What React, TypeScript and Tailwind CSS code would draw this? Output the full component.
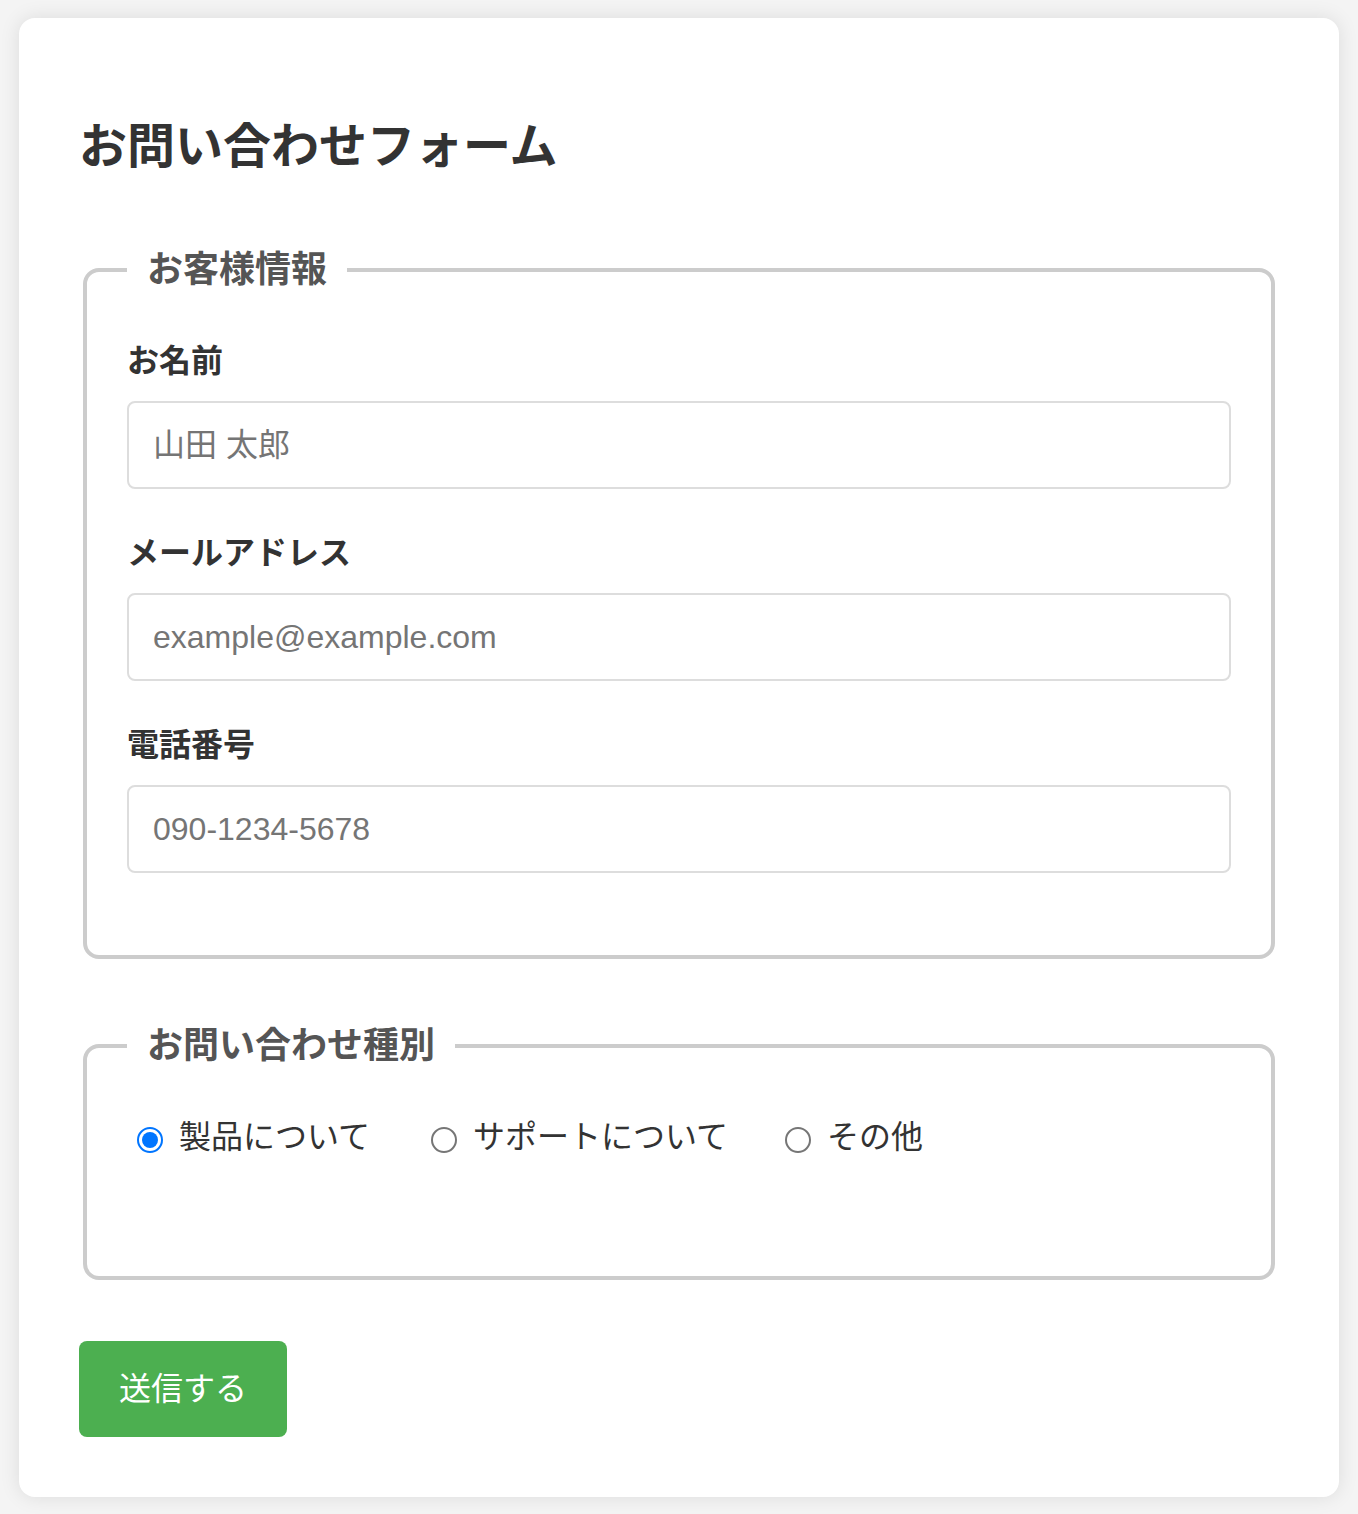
import React from 'react';

const fontStack = "font-['Liberation_Sans','Noto_Sans_CJK_JP',sans-serif]";

function Field({ label, placeholder, last }: { label: string; placeholder: string; last?: boolean }) {
  return (
    <div className={last ? 'mb-[42px]' : 'mb-[40px]'}>
      <label className="block text-[32px] leading-[48px] font-bold text-[#333] mb-[16px]">{label}</label>
      <input
        type="text"
        placeholder={placeholder}
        className="block w-full h-[88px] px-[24px] text-[32px] border-2 border-[#ddd] rounded-[8px] bg-white text-[#333] placeholder:text-[#757575] outline-none"
      />
    </div>
  );
}

function Radio({ label, checked, className }: { label: string; checked?: boolean; className?: string }) {
  return (
    <label className={`flex items-center ${className ?? ''}`}>
      {checked ? (
        <span className="ml-[10px] mt-[6px] w-[26px] h-[26px] rounded-full border-[2px] border-[#0075ff] flex items-center justify-center">
          <span className="w-[16px] h-[16px] rounded-full bg-[#0075ff]"></span>
        </span>
      ) : (
        <span className="ml-[10px] mt-[6px] w-[26px] h-[26px] rounded-full border-[2px] border-[#767676] bg-white"></span>
      )}
      <span className="ml-[16px] text-[32px] leading-[48px] text-[#333]">{label}</span>
    </label>
  );
}

export default function App() {
  return (
    <div className={`min-h-[1514px] bg-[#f4f4f4] pt-[18px] px-[19px] pb-[17px] ${fontStack}`}>
      <div className="bg-white rounded-[16px] shadow-[0_0_20px_rgba(0,0,0,0.1)] p-[60px]">
        <h2 className="mt-[40px] mb-[67px] text-[48px] leading-[58px] font-bold text-[#333]">お問い合わせフォーム</h2>

        {/* Customer info */}
        <fieldset className="mx-[4px] mb-[60px] border-[4px] border-[#ccc] rounded-[16px] px-[40px] pb-[40px]">
          <legend className="px-[20px] text-[36px] leading-[54px] font-bold text-[#555]">お客様情報</legend>
          <div className="pt-[40px]">
            <Field label="お名前" placeholder="山田 太郎" />
            <Field label="メールアドレス" placeholder="example@example.com" />
            <Field label="電話番号" placeholder="090-1234-5678" last />
          </div>
        </fieldset>

        {/* Inquiry type */}
        <fieldset className="mx-[4px] mb-[61px] border-[4px] border-[#ccc] rounded-[16px] px-[40px] pb-[40px]">
          <legend className="px-[20px] text-[36px] leading-[54px] font-bold text-[#555]">お問い合わせ種別</legend>
          <div className="pt-[40px]">
            <div className="flex items-center h-[48px] mb-[75px]">
              <Radio label="製品について" checked className="mr-[51px]" />
              <Radio label="サポートについて" className="mr-[47px]" />
              <Radio label="その他" />
            </div>
          </div>
        </fieldset>

        <button className="bg-[#4caf50] text-white text-[32px] leading-[48px] px-[40px] py-[24px] rounded-[8px]">
          送信する
        </button>
      </div>
    </div>
  );
}
